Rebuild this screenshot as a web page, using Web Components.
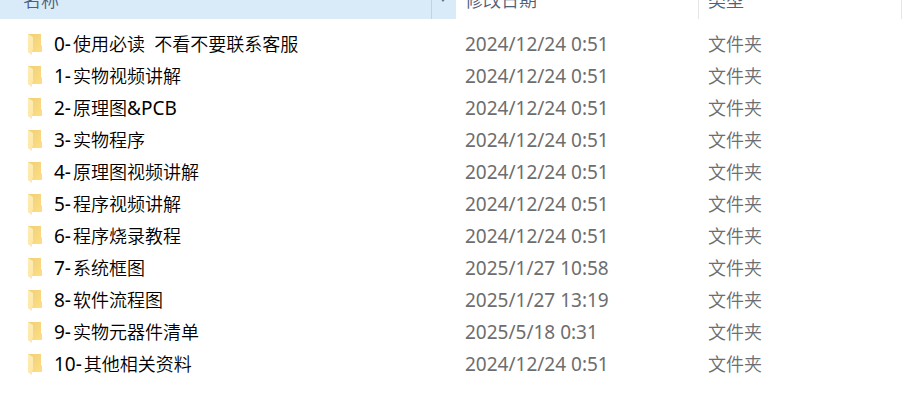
<!DOCTYPE html>
<html lang="zh-CN">
<head>
<meta charset="UTF-8">
<title>文件列表</title>
<style>
    body {
        margin: 0;
        background: #fff;
        font-family: "Noto Sans", "Noto Sans CJK SC", sans-serif;
        font-size: 18px;
        font-weight: 350;
    }
</style>
</head>
<body>
<file-list></file-list>

<script>
class FolderLabel extends HTMLElement {
    constructor() {
        super();
        this.attachShadow({ mode: 'open' });
        this.shadowRoot.innerHTML = `
            <style>
                :host {
                    display: flex;
                    align-items: center;
                    gap: 12px;
                    padding-left: 28px;
                    color: #000;
                    white-space: pre;
                }

                svg {
                    flex: none;
                }
            </style>
            <svg width="14" height="22" viewBox="0 0 14 22" aria-hidden="true">
                <defs>
                    <linearGradient id="back" x1="0" y1="0" x2="1" y2="1">
                        <stop offset="0" stop-color="#edcf78"/>
                        <stop offset="1" stop-color="#ffdf84"/>
                    </linearGradient>
                    <linearGradient id="front" x1="0" y1="0" x2="0" y2="1">
                        <stop offset="0" stop-color="#feecb6"/>
                        <stop offset="1" stop-color="#ffe7a4"/>
                    </linearGradient>
                </defs>
                <path d="M0 1H13V12L14 13V19H0Z" fill="url(#back)"/>
                <path d="M0 1L5 4V17L4 18V22L0 19Z" fill="url(#front)"/>
            </svg>
            <span><slot></slot></span>
        `;
    }
}

class ColumnTitle extends HTMLElement {
    constructor() {
        super();
        this.attachShadow({ mode: 'open' });
        this.shadowRoot.innerHTML = `
            <style>
                /* 表头上半部分已滚出窗口 */
                :host {
                    display: flex;
                    align-items: flex-end;
                    height: 19px;
                    overflow: hidden;
                    box-sizing: border-box;
                    border-right: 1px solid #e5e5e5;
                }

                :host([active]) {
                    background: #d9ebf9;
                    border-right: 0;
                }

                button {
                    border: 0;
                    padding: 0 0 7px 9px;
                    background: none;
                    color: #4c607a;
                    font: inherit;
                    line-height: 24px;
                    text-align: left;
                }

                .title {
                    flex: 1;
                }

                .menu {
                    display: none;
                    box-sizing: border-box;
                    width: 25px;
                    height: 30px;
                    border-left: 1px solid #bcd4e6;
                    padding: 0 0 17px 8px;
                    align-items: flex-end;
                }

                :host([active]) .title {
                    padding-left: 23px;
                }

                :host([active]) .menu {
                    display: flex;
                }
            </style>
            <button class="title"><slot></slot></button>
            <button class="menu" aria-label="筛选">
                <svg width="6" height="4" viewBox="0 0 6 4"><path d="M0 0H6L3 4Z" fill="#65737f"/></svg>
            </button>
        `;
    }
}

class FileList extends HTMLElement {
    constructor() {
        super();
        this.attachShadow({ mode: 'open' });
        this.files = [
            ['0-', '使用必读  不看不要联系客服', '2024/12/24 0:51'],
            ['1-', '实物视频讲解', '2024/12/24 0:51'],
            ['2-', '原理图<span class="latin">&amp;PCB</span>', '2024/12/24 0:51'],
            ['3-', '实物程序', '2024/12/24 0:51'],
            ['4-', '原理图视频讲解', '2024/12/24 0:51'],
            ['5-', '程序视频讲解', '2024/12/24 0:51'],
            ['6-', '程序烧录教程', '2024/12/24 0:51'],
            ['7-', '系统框图', '2025/1/27 10:58'],
            ['8-', '软件流程图', '2025/1/27 13:19'],
            ['9-', '实物元器件清单', '2025/5/18 0:31'],
            ['10-', '其他相关资料', '2024/12/24 0:51']
        ];
        this.render();
    }

    render() {
        const rows = this.files.map(([number, name, date]) => `
            <tr>
                <td><folder-label><span class="latin number">${number}</span>${name}</folder-label></td>
                <td class="info latin">${date}</td>
                <td class="info">文件夹</td>
                <td></td>
            </tr>`).join('');

        this.shadowRoot.innerHTML = `
            <style>
                :host {
                    display: block;
                }

                table {
                    width: 100%;
                    table-layout: fixed;
                    border-collapse: collapse;
                }

                th, td {
                    padding: 0;
                    font-weight: inherit;
                    text-align: left;
                }

                .name { width: 456px; }
                .modified { width: 243px; }
                .type { width: 203px; }

                thead::after {
                    content: "";
                    display: block;
                    height: 9px;
                }

                td {
                    height: 32px;
                    line-height: 32px;
                    white-space: nowrap;
                }

                .info {
                    padding-left: 9px;
                    color: #6d6d6d;
                }

                .latin {
                    font-size: 19px;
                    font-weight: 400;
                }

                .number {
                    margin-right: 2px;
                }
            </style>
            <table>
                <colgroup><col class="name"><col class="modified"><col class="type"><col></colgroup>
                <thead>
                    <tr>
                        <th><column-title active>名称</column-title></th>
                        <th><column-title>修改日期</column-title></th>
                        <th><column-title>类型</column-title></th>
                        <th></th>
                    </tr>
                </thead>
                <tbody>${rows}</tbody>
            </table>
        `;
    }
}

customElements.define('folder-label', FolderLabel);
customElements.define('column-title', ColumnTitle);
customElements.define('file-list', FileList);
</script>
</body>
</html>
